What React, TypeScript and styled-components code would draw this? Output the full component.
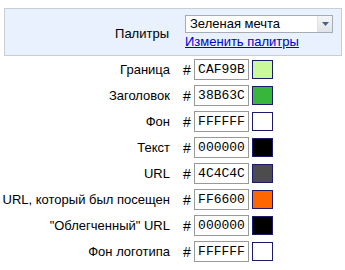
import { FC } from "react";
import styled, { createGlobalStyle } from "styled-components";

const COLORS = [
  { label: "Граница", hex: "CAF99B" },
  { label: "Заголовок", hex: "38B63C" },
  { label: "Фон", hex: "FFFFFF" },
  { label: "Текст", hex: "000000" },
  { label: "URL", hex: "4C4C4C" },
  { label: "URL, который был посещен", hex: "FF6600" },
  { label: "\"Облегченный\" URL", hex: "000000" },
  { label: "Фон логотипа", hex: "FFFFFF" },
];

const App = () => {
  return (
    <>
      <GlobalStyle />
      <Wrapper>
        <PalettePanel>
          <PanelLabel>Палитры</PanelLabel>
          <PanelControls>
            <Select>
              <SelectValue>Зеленая мечта</SelectValue>
              <SelectButton>
                <svg width="7" height="4" viewBox="0 0 7 4">
                  <path d="M0 0h7L3.5 4z" fill="#4d6185" />
                </svg>
              </SelectButton>
            </Select>
            <EditLink href="#">Изменить палитры</EditLink>
          </PanelControls>
        </PalettePanel>

        <ColorList>
          {COLORS.map((c) => (
            <ColorRow key={c.label} {...c} />
          ))}
        </ColorList>
      </Wrapper>
    </>
  );
};

export default App;

interface ColorRowProps {
  label: string;
  hex: string;
}

const ColorRow: FC<ColorRowProps> = ({ label, hex }) => (
  <Row>
    <RowLabel>{label}</RowLabel>
    <Hash>#</Hash>
    <HexInput>{hex}</HexInput>
    <Swatch $color={`#${hex}`} />
  </Row>
);

const GlobalStyle = createGlobalStyle`
  body {
    margin: 0;
    background: #fff;
    font-family: "Liberation Sans", Arial, sans-serif;
    font-size: 13px;
    color: #000;
  }
`;

const Wrapper = styled.div`
  width: 345px;
  height: 270px;
  padding-top: 8px;
  box-sizing: border-box;
`;

const PalettePanel = styled.div`
  display: flex;
  align-items: flex-start;
  margin: 0 3px 0 4px;
  height: 48px;
  box-sizing: border-box;
  border: 1px solid #c6ced6;
  background: #e8f1fd;
`;

const PanelLabel = styled.div`
  width: 164px;
  padding-top: 17px;
  text-align: right;
`;

const PanelControls = styled.div`
  display: flex;
  flex-direction: column;
  margin-left: 16px;
  padding-top: 6px;
`;

const Select = styled.div`
  display: flex;
  width: 148px;
  height: 18px;
  box-sizing: border-box;
  border: 1px solid #a5acb5;
  background: #fff;
`;

const SelectValue = styled.div`
  flex: 1;
  padding-left: 4px;
  line-height: 16px;
`;

const SelectButton = styled.div`
  display: flex;
  align-items: center;
  justify-content: center;
  width: 14px;
  border-left: 1px solid #dde2e8;
  background: linear-gradient(#f4f6f8, #dfe4ea);
`;

const EditLink = styled.a`
  margin-top: 1px;
  color: #0000cc;
  line-height: 15px;
  text-decoration: underline;
`;

const ColorList = styled.div`
  display: flex;
  flex-direction: column;
  gap: 5px;
  margin-top: 3px;
`;

const Row = styled.div`
  display: flex;
  align-items: center;
  height: 21px;
`;

const RowLabel = styled.div`
  width: 170px;
  text-align: right;
  white-space: nowrap;
`;

const Hash = styled.div`
  margin-left: 13px;
  width: 8px;
  font-size: 14px;
`;

const HexInput = styled.div`
  margin-left: 3px;
  width: 55px;
  height: 21px;
  box-sizing: border-box;
  border: 1px solid #999;
  background: #fff;
  font-family: "Liberation Mono", "Courier New", monospace;
  font-size: 13px;
  line-height: 19px;
  text-align: center;
`;

const Swatch = styled.div<{ $color: string }>`
  margin-left: 3px;
  width: 21px;
  height: 19px;
  box-sizing: border-box;
  border: 1px solid #1a1a6e;
  background: ${({ $color }) => $color};
`;
